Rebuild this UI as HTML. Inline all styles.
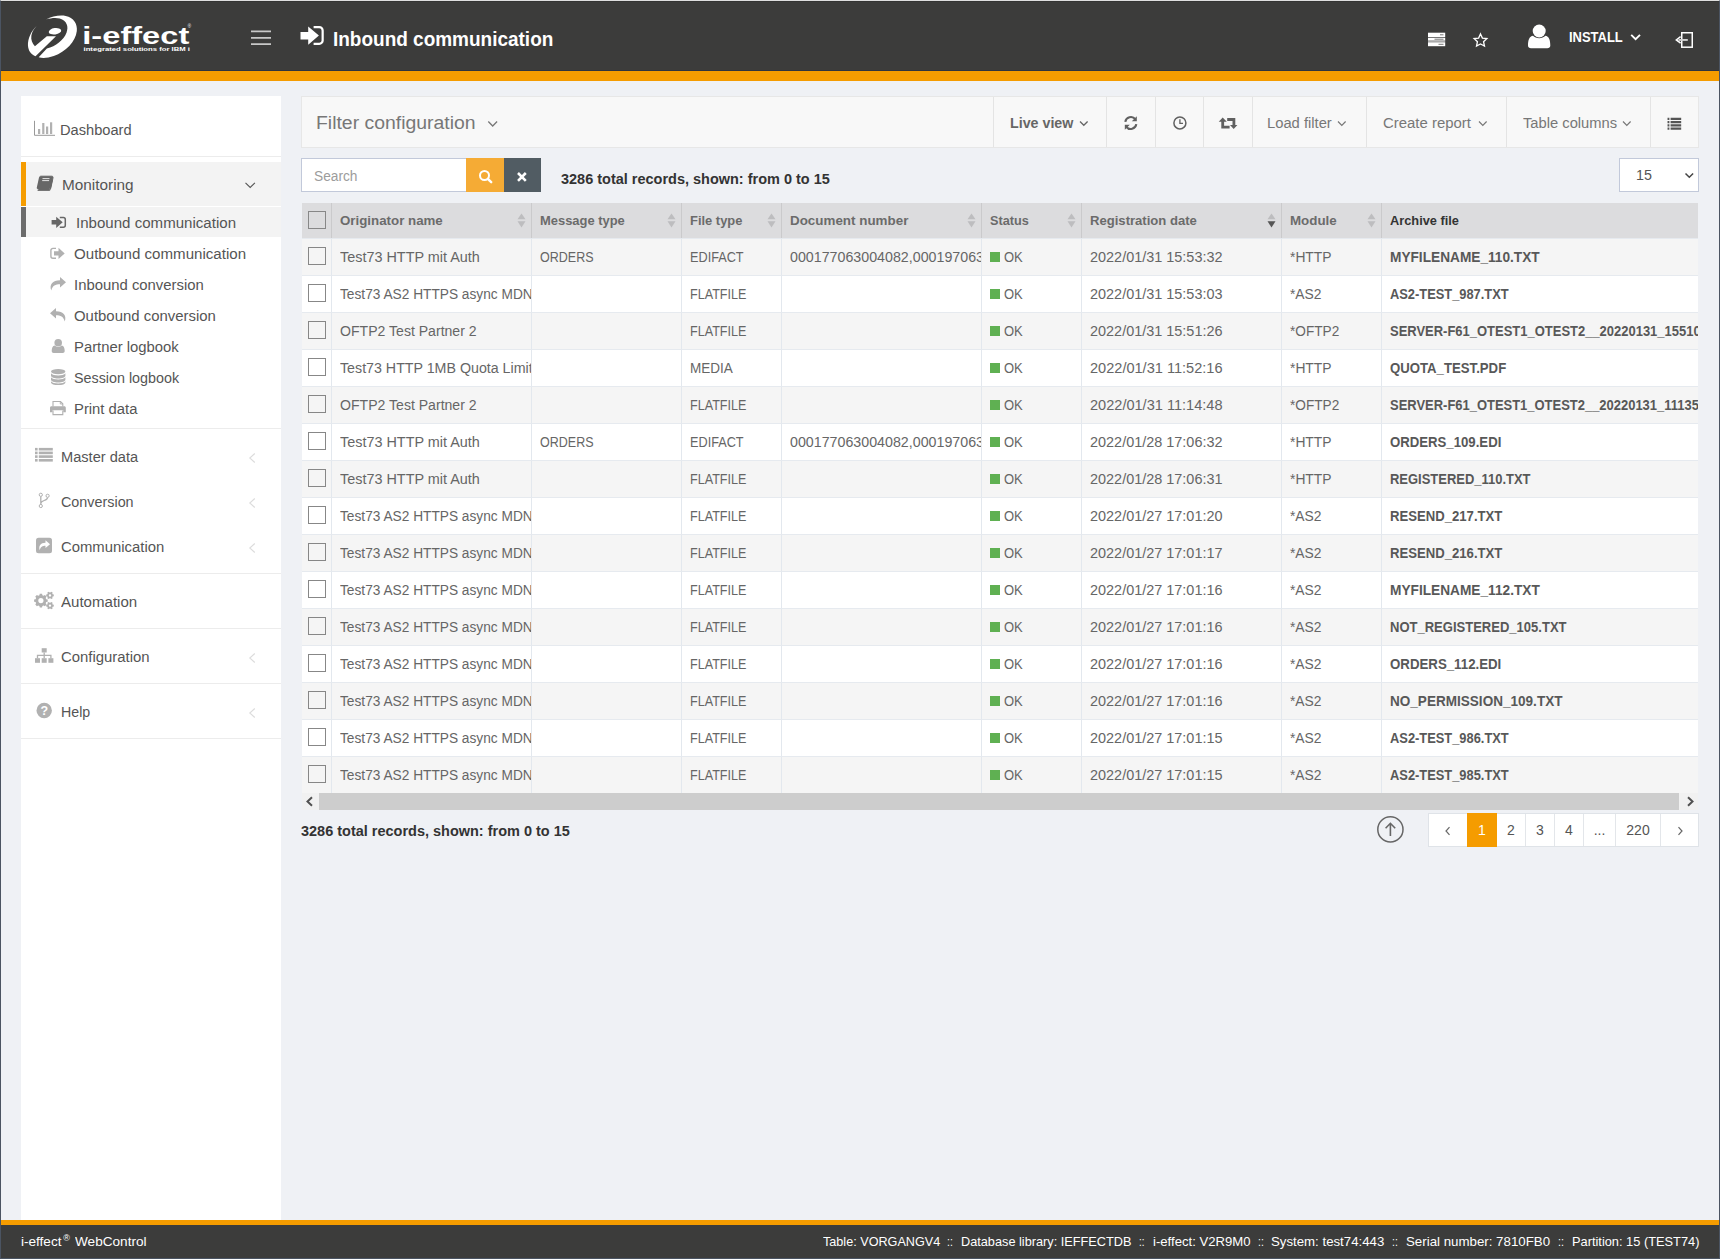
<!DOCTYPE html>
<html lang="en">
<head>
<meta charset="utf-8">
<title>Inbound communication - i-effect WebControl</title>
<style>
*{box-sizing:border-box;margin:0;padding:0}
html,body{width:1720px;height:1259px;overflow:hidden}
body{position:relative;background:#eff1f5;font-family:"Liberation Sans",sans-serif;font-size:14px;color:#555;}
.abs{position:absolute}
.sx{display:inline-block;transform-origin:0 50%;white-space:pre}
#frame{position:absolute;left:0;top:0;width:1720px;height:1259px;border:1px solid #4b5462;border-top-color:#dfdfdf;z-index:100;pointer-events:none}
#header{position:absolute;left:1px;top:1px;width:1718px;height:70px;background:#3c3c3b;border-top:1px solid #343433}
#obar{position:absolute;left:1px;top:70px;width:1718px;height:11px;background:#f59c00;border-top:1px solid #2f343f}
#title{position:absolute;left:333px;top:26px;font-size:20px;font-weight:700;color:#fff;white-space:nowrap;line-height:26px}
#user{position:absolute;left:1569px;top:27px;font-size:14px;font-weight:700;color:#fff;line-height:20px;white-space:nowrap}
#sidebar{position:absolute;left:21px;top:96px;width:260px;height:1124px;background:#fff}
.sep{position:absolute;left:0;width:260px;height:1px;background:#ececec}
.mi,.si{position:absolute;font-size:14px;color:#555;line-height:20px;white-space:nowrap}
#fpanel{position:absolute;left:301px;top:96px;width:1398px;height:52px;background:#f8f8f8;border:1px solid #e7e7e7}
#fpanel .ft{position:absolute;left:14.2px;top:14px;font-size:18px;color:#777;line-height:24px;white-space:nowrap}
.tb{position:absolute;top:0;height:50px;border-left:1px solid #e4e4e4;font-size:14px;color:#777;line-height:53px;white-space:nowrap}
.tb>span{position:absolute;top:0;white-space:nowrap}
#sinput{position:absolute;left:301px;top:158px;width:166px;height:34px;background:#fff;border:1px solid #c2c9da;border-right:none;font-size:14px;color:#9c9c9c;line-height:34px;padding-left:12.3px}
#sbtn{position:absolute;left:466px;top:158px;width:38px;height:34px;background:#f5ab35}
#xbtn{position:absolute;left:504px;top:158px;width:37px;height:34px;background:#515c63}
.rec{position:absolute;font-size:14px;font-weight:700;color:#333;line-height:20px;white-space:nowrap}
#psel{position:absolute;left:1619px;top:158px;width:80px;height:34px;background:#fff;border:1px solid #c2c9da;font-size:14px;color:#555;line-height:33px;padding-left:16px}
#grid{position:absolute;left:302px;top:203px;width:1396px;table-layout:fixed;border-collapse:separate;border-spacing:0;font-size:14px;color:#666}
#grid th{height:35px;background:#dcdcde;border-left:1px solid #cacacc;font-size:13px;font-weight:700;color:#6b6b6b;text-align:left;padding:0 0 0 7.6px;position:relative;white-space:nowrap;overflow:hidden}
#grid th:first-child,#grid td:first-child{border-left:none;padding:0}
#grid td{height:37px;border-left:1px solid #e3e8ee;border-top:1px solid #e6eaef;padding:0 0 0 7.6px;white-space:nowrap;overflow:hidden}
#grid tr:nth-child(odd) td{background:#f5f5f5}
#grid tr:nth-child(even) td{background:#fff}
#grid td.af{font-weight:700;color:#585858}
.cb{display:block;width:18px;height:18px;border:1px solid #878787;margin-left:6px;position:relative;top:-1px}
th .cb{top:-1px}
.sq{display:inline-block;width:10px;height:10px;background:#5fb052;margin-right:4px;vertical-align:0.5px}
.so{position:absolute;right:5px;top:10px;width:9px;height:15px}
#hscroll{position:absolute;left:302px;top:793px;width:1396px;height:17px;background:#f1f1f1}
#hscroll i{position:absolute;left:17px;top:0;width:1360px;height:17px;background:#cdcdcd}
#pager{position:absolute;left:1428px;top:813px;height:34px;display:flex;background:#fff;border:1px solid #dfe3e8;font-size:14px;color:#555}
#pager div{height:32px;line-height:32px;text-align:center;border-left:1px solid #e3e6ea}
#pager div:first-child{border-left:none}
#footer{position:absolute;left:1px;top:1220px;width:1718px;height:38px;background:#3c3c3b;border-top:5px solid #f59c00;color:#fff;font-size:13px}
</style>
</head>
<body>
<div id="header"></div>
<div id="obar"></div>
<svg class="abs" style="left:0;top:0" width="300" height="71" viewBox="0 0 300 71">
 <g transform="translate(24,12) scale(0.03971)" fill="#fff">
  <path d="M555,190 C700,110 900,70 1050,100 C1250,140 1350,300 1330,480 C1300,750 1050,1000 750,1110 C600,1160 470,1172 370,1140 L576,921 C800,860 1000,700 1070,520 C1130,370 1080,220 900,165 C800,140 680,150 555,190 Z"/>
  <path d="M320,350 C180,470 90,680 100,850 C110,980 180,1070 290,1115 L805,610 L575,612 L275,860 C210,800 170,700 185,600 C200,500 250,420 320,350 Z"/>
  <ellipse cx="780" cy="485" rx="158" ry="80" transform="rotate(-8 780 485)"/>
 </g>
 <text x="82.3" y="43.6" font-family="Liberation Sans, sans-serif" font-weight="700" font-size="24.5" fill="#fff" textLength="107" lengthAdjust="spacingAndGlyphs">i-effect</text>
 <text x="187.8" y="28" font-family="Liberation Sans, sans-serif" font-size="4.5" fill="#fff">®</text>
 <g transform="translate(83.5,51.2) scale(0.5)"><text x="0" y="0" font-family="Liberation Sans, sans-serif" font-weight="700" font-size="12" fill="#fff" textLength="213" lengthAdjust="spacingAndGlyphs">integrated solutions for IBM i</text></g>
</svg>
<svg class="abs" style="left:251px;top:30px" width="20" height="16" viewBox="0 0 20 16"><path d="M0,1.300H20M0,7.800H20M0,14.200H20" stroke="#c8c8c8" stroke-width="1.700" fill="none"/></svg>
<svg class="abs" style="left:300px;top:26px" width="25" height="20" viewBox="0 0 25 20"><path d="M0.500,5.900H8.200V0.400L18.900,9.600L8.200,18.800V13.500H0.500Z" fill="#fff"/><path d="M13.600,1.150H19.300A3.350,3.350 0 0 1 22.650,4.500V14.450A3.350,3.350 0 0 1 19.300,17.800H13.600" fill="none" stroke="#fff" stroke-width="2.200"/></svg>
<div id="title"><span class="sx" style="transform:scaleX(0.9488)">Inbound communication</span></div>
<svg class="abs" style="left:1428px;top:32px" width="18" height="15" viewBox="0 0 18 15"><rect x="0" y="0.700" width="17.200" height="4.300" fill="#fff"/><rect x="0" y="5.700" width="17.200" height="3" fill="#fff"/><rect x="0" y="8.700" width="17.200" height="1.600" fill="#aaa"/><rect x="0" y="10.300" width="17.200" height="3.900" fill="#fff"/><path d="M12,2.800H15.500M6.500,7.200H15.500M10.500,12.300H15.500" stroke="#777" stroke-width="1"/></svg>
<svg class="abs" style="left:1471px;top:31px" width="19" height="18" viewBox="0 0 19 18"><path transform="translate(9.5 9.3) scale(0.9) translate(-9.6 -9.3)" d="M9.600,2.200L11.700,6.800L16.700,7.400L13,10.800L14,15.700L9.600,13.300L5.200,15.700L6.200,10.800L2.500,7.400L7.500,6.800Z" fill="none" stroke="#fff" stroke-width="1.450" stroke-linejoin="miter"/></svg>
<svg class="abs" style="left:1527px;top:24px" width="24" height="25" viewBox="0 0 24 25" fill="#fff"><circle cx="12.200" cy="7" r="6.500"/><path d="M1,21.500C1,16 2.500,12.300 6,11.800C7.500,13.200 9.700,14.200 12.200,14.200C14.700,14.200 16.900,13.200 18.400,11.800C21.900,12.300 23.300,16 23.300,21.500C23.300,23.300 22,24.300 20.300,24.300H4C2.300,24.300 1,23.300 1,21.500Z"/></svg>
<div id="user"><span class="sx" style="transform:scaleX(0.9249)">INSTALL</span></div>
<svg class="abs" style="left:1630px;top:33px" width="12" height="8" viewBox="0 0 12 8"><path d="M1.200,1.800L5.600,6.200L10,1.800" fill="none" stroke="#fff" stroke-width="1.900"/></svg>
<svg class="abs" style="left:1675px;top:31px" width="19" height="18" viewBox="0 0 19 18"><rect x="6.750" y="1.750" width="10.500" height="14.450" fill="none" stroke="#fff" stroke-width="1.500"/><path d="M5.600,5.600L1.300,8.900L5.600,12.200" fill="none" stroke="#fff" stroke-width="1.500"/><rect x="3.500" y="8" width="9.300" height="1.900" fill="#d0d0d0"/></svg>
<div id="sidebar">
<div class="sep" style="top:60px"></div>
<div class="sep" style="top:332px"></div>
<div class="sep" style="top:477px"></div>
<div class="sep" style="top:532px"></div>
<div class="sep" style="top:587px"></div>
<div class="sep" style="top:642px"></div>
<div class="abs" style="left:0;top:66px;width:260px;height:44px;background:#f3f3f3;border-left:5px solid #f59c00"></div>
<div class="abs" style="left:0;top:111px;width:260px;height:30px;background:#f3f3f3;border-left:5px solid #6c6c6c"></div>
<div class="mi" style="left:38.8px;top:24.0px"><span class="sx" style="transform:scaleX(1.0453)">Dashboard</span></div>
<div class="mi" style="left:40.8px;top:79.0px"><span class="sx" style="transform:scaleX(1.0952)">Monitoring</span></div>
<div class="si" style="left:55.4px;top:116.5px"><span class="sx" style="transform:scaleX(1.0765)">Inbound communication</span></div>
<div class="si" style="left:53.3px;top:147.5px"><span class="sx" style="transform:scaleX(1.0786)">Outbound communication</span></div>
<div class="si" style="left:53.3px;top:178.5px"><span class="sx" style="transform:scaleX(1.0623)">Inbound conversion</span></div>
<div class="si" style="left:53.3px;top:209.5px"><span class="sx" style="transform:scaleX(1.0657)">Outbound conversion</span></div>
<div class="si" style="left:53.3px;top:240.5px"><span class="sx" style="transform:scaleX(1.0599)">Partner logbook</span></div>
<div class="si" style="left:53.3px;top:271.5px"><span class="sx" style="transform:scaleX(1.0232)">Session logbook</span></div>
<div class="si" style="left:53.3px;top:302.5px"><span class="sx" style="transform:scaleX(1.0578)">Print data</span></div>
<div class="mi" style="left:39.6px;top:351.0px"><span class="sx" style="transform:scaleX(1.0428)">Master data</span></div>
<div class="mi" style="left:39.6px;top:396.0px"><span class="sx" style="transform:scaleX(1.0252)">Conversion</span></div>
<div class="mi" style="left:39.6px;top:441.0px"><span class="sx" style="transform:scaleX(1.0612)">Communication</span></div>
<div class="mi" style="left:39.6px;top:496.0px"><span class="sx" style="transform:scaleX(1.0761)">Automation</span></div>
<div class="mi" style="left:39.6px;top:551.0px"><span class="sx" style="transform:scaleX(1.0643)">Configuration</span></div>
<div class="mi" style="left:39.6px;top:606.0px"><span class="sx" style="transform:scaleX(1.0134)">Help</span></div>
<svg class="abs" style="left:223px;top:85px" width="12" height="9" viewBox="0 0 12 9"><path d="M1.500,1.800L6.200,6.500L10.900,1.800" fill="none" stroke="#555" stroke-width="1.100"/></svg>
<svg class="abs" style="left:227px;top:355.7px" width="9" height="12" viewBox="0 0 9 12"><path d="M6.800,1.500L1.800,6L6.800,10.500" fill="none" stroke="#dcdcdc" stroke-width="1.100"/></svg>
<svg class="abs" style="left:227px;top:400.7px" width="9" height="12" viewBox="0 0 9 12"><path d="M6.800,1.500L1.800,6L6.800,10.500" fill="none" stroke="#dcdcdc" stroke-width="1.100"/></svg>
<svg class="abs" style="left:227px;top:445.7px" width="9" height="12" viewBox="0 0 9 12"><path d="M6.800,1.500L1.800,6L6.800,10.500" fill="none" stroke="#dcdcdc" stroke-width="1.100"/></svg>
<svg class="abs" style="left:227px;top:555.7px" width="9" height="12" viewBox="0 0 9 12"><path d="M6.800,1.500L1.800,6L6.800,10.500" fill="none" stroke="#dcdcdc" stroke-width="1.100"/></svg>
<svg class="abs" style="left:227px;top:610.7px" width="9" height="12" viewBox="0 0 9 12"><path d="M6.800,1.500L1.800,6L6.800,10.500" fill="none" stroke="#dcdcdc" stroke-width="1.100"/></svg>
<svg class="abs" style="left:13px;top:24px" width="22" height="17" viewBox="0 0 22 17"><path d="M0.500,0.800V15.300H21" fill="none" stroke="#999" stroke-width="1"/><rect x="4" y="9" width="2.200" height="5" fill="#b1b1b1"/><rect x="8.200" y="3" width="2.200" height="11" fill="#b1b1b1"/><rect x="12" y="6.500" width="2.200" height="7.500" fill="#b1b1b1"/><rect x="16" y="2.300" width="2.200" height="11.700" fill="#b1b1b1"/></svg>
<svg class="abs" style="left:15px;top:79px" width="18" height="17" viewBox="0 0 18 17"><path d="M4.300,1.200H15.800C16.700,1.200 17.200,1.900 17,2.800L14.800,13.200C14.600,14 14,14.500 13.200,14.500H2.500C1.900,14.500 1.600,15 1.900,15.400H13.800L16.200,5.500" fill="none" stroke="#676767" stroke-width="1"/><path d="M4.300,1.200H15.800C16.700,1.200 17.200,1.900 17,2.800L14.800,12.600C14.600,13.400 14,13.900 13.200,13.900H1.700C0.900,13.900 0.600,13.300 0.800,12.500L3,2.400C3.200,1.600 3.600,1.200 4.300,1.200Z" fill="#676767"/><path d="M6.500,3.600H13.500M6.200,5.600H13.100" stroke="#f3f3f3" stroke-width="0.900"/></svg>
<svg class="abs" style="left:30px;top:120px" width="16" height="13" viewBox="0 0 16 13"><path d="M0.600,4H5.200V0.700L11.700,6.300L5.200,11.900V8.500H0.600Z" fill="#676767"/><path d="M8.800,1.450H12.300A2,2 0 0 1 14.300,3.450V9.250A2,2 0 0 1 12.300,11.250H8.800" fill="none" stroke="#676767" stroke-width="1.500"/></svg>
<svg class="abs" style="left:29px;top:151px" width="16" height="13" viewBox="0 0 16 13"><path d="M6,1.350H2.900A2,2 0 0 0 0.900,3.350V9.250A2,2 0 0 0 2.900,11.250H6" fill="none" stroke="#b1b1b1" stroke-width="1.400"/><path d="M4,4.200H8.500V0.800L14.700,6.400L8.500,12V8.600H4Z" fill="#b1b1b1"/></svg>
<svg class="abs" style="left:28px;top:180px" width="18" height="16" viewBox="0 0 18 16"><path d="M11,1L17,6.200L11,11.400V8.300C6.500,8.300 3.500,9.500 2.300,14.600C0,8.500 3.500,4.200 11,4.200Z" fill="#b1b1b1"/></svg>
<svg class="abs" style="left:28px;top:211px" width="18" height="16" viewBox="0 0 18 16"><path d="M7,1L1,6.200L7,11.400V8.300C11.500,8.300 14.500,9.500 15.700,14.600C18,8.500 14.500,4.200 7,4.200Z" fill="#b1b1b1"/></svg>
<svg class="abs" style="left:30px;top:242px" width="15" height="16" viewBox="0 0 15 16"><circle cx="7.200" cy="4.800" r="3.800" fill="#b1b1b1"/><path d="M0.700,13C0.700,10 1.600,7.700 3.700,7.500C4.600,8.300 5.800,8.900 7.200,8.900C8.600,8.900 9.800,8.300 10.700,7.500C12.800,7.700 13.700,10 13.700,13C13.700,14.200 12.900,15 11.800,15H2.600C1.500,15 0.700,14.200 0.700,13Z" fill="#b1b1b1"/></svg>
<svg class="abs" style="left:29px;top:272px" width="16" height="18" viewBox="0 0 16 18"><ellipse cx="8.200" cy="3.600" rx="7.200" ry="2.700" fill="#b1b1b1"/><path d="M1,5.300C2,6.900 5,7.400 8.200,7.400C11.400,7.400 14.400,6.900 15.400,5.300V7.700C15.400,9.200 12.200,10.400 8.200,10.400C4.200,10.400 1,9.200 1,7.700Z" fill="#b1b1b1"/><path d="M1,9.300C2,10.900 5,11.400 8.200,11.400C11.400,11.400 14.400,10.900 15.400,9.300V11.700C15.400,13.200 12.200,14.400 8.200,14.400C4.200,14.400 1,13.200 1,11.700Z" fill="#b1b1b1"/><path d="M1,13.300C2,14.900 5,15.400 8.200,15.400C11.400,15.400 14.400,14.900 15.400,13.300V14.400C15.400,15.900 12.200,17.100 8.200,17.100C4.200,17.100 1,15.900 1,14.400Z" fill="#b1b1b1"/></svg>
<svg class="abs" style="left:28px;top:304px" width="18" height="16" viewBox="0 0 18 16"><path d="M4,6.500V1.500H11.500L13.800,3.800V6.500" fill="none" stroke="#b1b1b1" stroke-width="1.100"/><path d="M11.300,1.500V4H13.800" fill="none" stroke="#b1b1b1" stroke-width="0.900"/><path d="M2.500,6.200H15.300C16.200,6.200 16.800,6.800 16.800,7.700V12.300H14.300V10.200H3.500V12.300H1V7.700C1,6.800 1.600,6.200 2.500,6.200Z" fill="#b1b1b1"/><path d="M4,10.500V14.600H13.800V10.500" fill="none" stroke="#b1b1b1" stroke-width="1.100"/></svg>
<svg class="abs" style="left:13px;top:351px" width="20" height="16" viewBox="0 0 20 16"><rect x="1" y="0.9" width="2.600" height="2.600" fill="#b1b1b1"/><rect x="4.800" y="0.9" width="14" height="2.600" fill="#b1b1b1"/><rect x="1" y="4.6" width="2.600" height="2.600" fill="#b1b1b1"/><rect x="4.800" y="4.6" width="14" height="2.600" fill="#b1b1b1"/><rect x="1" y="8.3" width="2.600" height="2.600" fill="#b1b1b1"/><rect x="4.800" y="8.3" width="14" height="2.600" fill="#b1b1b1"/><rect x="1" y="12.0" width="2.600" height="2.600" fill="#b1b1b1"/><rect x="4.800" y="12.0" width="14" height="2.600" fill="#b1b1b1"/></svg>
<svg class="abs" style="left:17px;top:396px" width="13" height="17" viewBox="0 0 13 17"><circle cx="2.800" cy="2.800" r="1.600" fill="none" stroke="#b1b1b1" stroke-width="1"/><circle cx="2.800" cy="14" r="1.600" fill="none" stroke="#b1b1b1" stroke-width="1"/><circle cx="9.600" cy="3.800" r="1.600" fill="none" stroke="#b1b1b1" stroke-width="1"/><path d="M2.800,4.400V12.400M9.600,5.400C9.600,9 2.800,8 2.800,11.500" fill="none" stroke="#b1b1b1" stroke-width="1.300"/></svg>
<svg class="abs" style="left:14px;top:441px" width="18" height="17" viewBox="0 0 18 17"><rect x="1" y="0.800" width="16" height="15.400" rx="2.500" fill="#b1b1b1"/><path d="M10.500,3.300L15,7.200L10.500,11.100V8.800C7.500,8.800 5.500,9.700 4.800,13.300C3.300,9 5.500,5.700 10.500,5.700Z" fill="#fff"/></svg>
<svg class="abs" style="left:12px;top:495px" width="22" height="19" viewBox="0 0 22 19"><path d="M13.20,8.13L14.70,8.43L14.70,10.77L13.20,11.07L12.69,12.31L13.53,13.58L11.88,15.23L10.61,14.39L9.37,14.90L9.07,16.40L6.73,16.40L6.43,14.90L5.19,14.39L3.92,15.23L2.27,13.58L3.11,12.31L2.60,11.07L1.10,10.77L1.10,8.43L2.60,8.13L3.11,6.89L2.27,5.62L3.92,3.97L5.19,4.81L6.43,4.30L6.73,2.80L9.07,2.80L9.37,4.30L10.61,4.81L11.88,3.97L13.53,5.62L12.69,6.89ZM10.50,9.60A2.6,2.6 0 1,0 5.30,9.60A2.6,2.6 0 1,0 10.50,9.60Z" fill="#b1b1b1" fill-rule="evenodd"/><path d="M19.67,3.27L20.81,3.55L20.81,5.25L19.67,5.53L19.31,6.15L19.64,7.27L18.17,8.12L17.36,7.28L16.64,7.28L15.83,8.12L14.36,7.27L14.69,6.15L14.33,5.53L13.19,5.25L13.19,3.55L14.33,3.27L14.69,2.65L14.36,1.53L15.83,0.68L16.64,1.52L17.36,1.52L18.17,0.68L19.64,1.53L19.31,2.65ZM18.20,4.40A1.2,1.2 0 1,0 15.80,4.40A1.2,1.2 0 1,0 18.20,4.40Z" fill="#b1b1b1" fill-rule="evenodd"/><path d="M19.67,13.47L20.81,13.75L20.81,15.45L19.67,15.73L19.31,16.35L19.64,17.47L18.17,18.32L17.36,17.48L16.64,17.48L15.83,18.32L14.36,17.47L14.69,16.35L14.33,15.73L13.19,15.45L13.19,13.75L14.33,13.47L14.69,12.85L14.36,11.73L15.83,10.88L16.64,11.72L17.36,11.72L18.17,10.88L19.64,11.73L19.31,12.85ZM18.20,14.60A1.2,1.2 0 1,0 15.80,14.60A1.2,1.2 0 1,0 18.20,14.60Z" fill="#b1b1b1" fill-rule="evenodd"/></svg>
<svg class="abs" style="left:13px;top:551px" width="21" height="17" viewBox="0 0 21 17"><rect x="7.700" y="1.200" width="5" height="4.300" fill="#b1b1b1"/><rect x="1" y="11.200" width="5" height="4.600" fill="#b1b1b1"/><rect x="7.700" y="11.200" width="5" height="4.600" fill="#b1b1b1"/><rect x="14.400" y="11.200" width="5" height="4.600" fill="#b1b1b1"/><path d="M10.200,5.500V11.200M3.500,11.200V8.400H16.900V11.200" fill="none" stroke="#b1b1b1" stroke-width="1.300"/></svg>
<svg class="abs" style="left:15px;top:606px" width="17" height="17" viewBox="0 0 17 17"><circle cx="8.200" cy="8.500" r="7.700" fill="#b1b1b1"/><text x="8.200" y="13" text-anchor="middle" font-family="Liberation Sans, sans-serif" font-weight="700" font-size="12.500" fill="#fff">?</text></svg>
</div>
<div id="fpanel">
<div class="ft"><span class="sx" style="transform:scaleX(1.0779)">Filter configuration</span></div>
<svg class="abs" style="left:185px;top:23px" width="12" height="9" viewBox="0 0 12 9"><path d="M1.300,1.500L5.700,6L10.100,1.500" fill="none" stroke="#777" stroke-width="1.300"/></svg>
<div class="tb" style="left:691px;width:113px;font-weight:700;color:#666"><span style="left:16.3px"><span class="sx" style="transform:scaleX(1.0175)">Live view</span></span><svg class="abs" style="left:85px;top:23px" width="10" height="8" viewBox="0 0 10 8"><path d="M1,1.500L4.800,5.300L8.600,1.500" fill="none" stroke="#666" stroke-width="1.3"/></svg></div>
<div class="tb" style="left:804px;width:49px"><svg class="abs" style="left:16px;top:18px" width="16" height="16" viewBox="0 0 16 16"><path d="M2.300,6.800A5.600,5.600 0 0 1 12.300,4.200" fill="none" stroke="#606060" stroke-width="2.100"/><path d="M13.800,1.200V6.200H8.800Z" fill="#606060"/><path d="M13.300,9.200A5.600,5.600 0 0 1 3.300,11.800" fill="none" stroke="#606060" stroke-width="2.100"/><path d="M1.800,14.800V9.800H6.800Z" fill="#606060"/></svg></div>
<div class="tb" style="left:853px;width:49px"><svg class="abs" style="left:15.500px;top:17.700px" width="16" height="16" viewBox="0 0 16 16"><circle cx="7.900" cy="7.900" r="6" fill="none" stroke="#606060" stroke-width="1.500"/><path d="M7.900,4.200V8.300H11" fill="none" stroke="#606060" stroke-width="1.300"/></svg></div>
<div class="tb" style="left:901px;width:49px"><svg class="abs" style="left:14px;top:20px" width="21" height="14" viewBox="0 0 21 14"><path d="M4.700,0.600L8.800,4.700H6.100V8.800H11.600V11.600H3.300V4.700H0.700Z" fill="#606060"/><path d="M9.200,1H17.300V7.900H19.400L15.700,12.100L12,7.900H14.500V3.900H9.200Z" fill="#606060"/></svg></div>
<div class="tb" style="left:950px;width:114px"><span style="left:14.400px"><span class="sx" style="transform:scaleX(1.0537)">Load filter</span></span><svg class="abs" style="left:84px;top:23px" width="10" height="8" viewBox="0 0 10 8"><path d="M1,1.500L4.800,5.300L8.600,1.500" fill="none" stroke="#777" stroke-width="1.2"/></svg></div>
<div class="tb" style="left:1064px;width:140px"><span style="left:15.600px"><span class="sx" style="transform:scaleX(1.0655)">Create report</span></span><svg class="abs" style="left:111px;top:23px" width="10" height="8" viewBox="0 0 10 8"><path d="M1,1.500L4.800,5.300L8.600,1.500" fill="none" stroke="#777" stroke-width="1.2"/></svg></div>
<div class="tb" style="left:1204px;width:144px"><span style="left:15.700px"><span class="sx" style="transform:scaleX(1.0514)">Table columns</span></span><svg class="abs" style="left:115px;top:23px" width="10" height="8" viewBox="0 0 10 8"><path d="M1,1.500L4.800,5.300L8.600,1.500" fill="none" stroke="#777" stroke-width="1.2"/></svg></div>
<div class="tb" style="left:1348px;width:48px"><svg class="abs" style="left:16px;top:19.500px" width="15" height="13" viewBox="0 0 16 14"><path d="M0.500,2H2.500M0.500,5.500H2.500M0.500,9H2.500M0.500,12.500H2.500" stroke="#555" stroke-width="2.200"/><path d="M3.800,2H15.200M3.800,5.500H15.200M3.800,9H15.200M3.800,12.500H15.200" stroke="#555" stroke-width="2.200"/></svg></div>
</div>
<div id="sinput"><span class="sx" style="transform:scaleX(0.9803)">Search</span></div>
<div id="sbtn"><svg class="abs" style="left:12px;top:11px" width="16" height="15" viewBox="0 0 16 15"><circle cx="6.500" cy="6.500" r="4.500" fill="none" stroke="#fff" stroke-width="2"/><path d="M9.800,9.800L13.200,13.200" stroke="#fff" stroke-width="2.400" stroke-linecap="round"/></svg></div>
<div id="xbtn"><svg class="abs" style="left:12px;top:12.500px" width="12" height="12" viewBox="0 0 12 12"><path d="M2,2L9.800,9.800M9.800,2L2,9.800" stroke="#fff" stroke-width="2.600"/></svg></div>
<div class="rec" style="left:561px;top:169px"><span class="sx" style="transform:scaleX(1.0343)">3286 total records, shown: from 0 to 15</span></div>
<div id="psel"><span class="sx" style="transform:scaleX(1.0217)">15</span><svg class="abs" style="left:64px;top:12.500px" width="11" height="8" viewBox="0 0 11 8"><path d="M1.500,1.500L5.300,5.300L9.100,1.500" fill="none" stroke="#444" stroke-width="1.500"/></svg></div>
<table id="grid"><colgroup><col style="width:29px"><col style="width:200px"><col style="width:150px"><col style="width:100px"><col style="width:200px"><col style="width:100px"><col style="width:200px"><col style="width:100px"><col style="width:317px"></colgroup>
<thead><tr><th><span class="cb"></span></th><th><span class="sx" style="transform:scaleX(1.0235)">Originator name</span><svg class="so" viewBox="0 0 9 15"><path d="M0.500,6.300L4.500,0.500L8.500,6.300Z" fill="#bdbdbf"/><path d="M0.500,8.200L4.500,14.500L8.500,8.200Z" fill="#bdbdbf"/></svg></th><th><span class="sx" style="transform:scaleX(0.9947)">Message type</span><svg class="so" viewBox="0 0 9 15"><path d="M0.500,6.300L4.500,0.500L8.500,6.300Z" fill="#bdbdbf"/><path d="M0.500,8.200L4.500,14.500L8.500,8.200Z" fill="#bdbdbf"/></svg></th><th><span class="sx" style="transform:scaleX(0.9934)">File type</span><svg class="so" viewBox="0 0 9 15"><path d="M0.500,6.300L4.500,0.500L8.500,6.300Z" fill="#bdbdbf"/><path d="M0.500,8.200L4.500,14.500L8.500,8.200Z" fill="#bdbdbf"/></svg></th><th><span class="sx" style="transform:scaleX(1.0307)">Document number</span><svg class="so" viewBox="0 0 9 15"><path d="M0.500,6.300L4.500,0.500L8.500,6.300Z" fill="#bdbdbf"/><path d="M0.500,8.200L4.500,14.500L8.500,8.200Z" fill="#bdbdbf"/></svg></th><th><span class="sx" style="transform:scaleX(0.9761)">Status</span><svg class="so" viewBox="0 0 9 15"><path d="M0.500,6.300L4.500,0.500L8.500,6.300Z" fill="#bdbdbf"/><path d="M0.500,8.200L4.500,14.500L8.500,8.200Z" fill="#bdbdbf"/></svg></th><th><span class="sx" style="transform:scaleX(1.0067)">Registration date</span><svg class="so" viewBox="0 0 9 15"><path d="M0.500,6.300L4.500,0.500L8.500,6.300Z" fill="#bdbdbf"/><path d="M0.500,8.200L4.500,14.500L8.500,8.200Z" fill="#555"/></svg></th><th><span class="sx" style="transform:scaleX(1.0264)">Module</span><svg class="so" viewBox="0 0 9 15"><path d="M0.500,6.300L4.500,0.500L8.500,6.300Z" fill="#bdbdbf"/><path d="M0.500,8.200L4.500,14.500L8.500,8.200Z" fill="#bdbdbf"/></svg></th><th style="color:#333"><span class="sx" style="transform:scaleX(0.9834)">Archive file</span></th></tr></thead>
<tbody>
<tr><td><span class="cb"></span></td><td><span class="sx" style="transform:scaleX(1.0289)">Test73 HTTP mit Auth</span></td><td><span class="sx" style="transform:scaleX(0.8935)">ORDERS</span></td><td><span class="sx" style="transform:scaleX(0.9066)">EDIFACT</span></td><td><span class="sx" style="transform:scaleX(1.0169)">000177063004082,000197063004082</span></td><td><span class="sq"></span><span class="sx" style="transform:scaleX(0.9284)">OK</span></td><td><span class="sx" style="transform:scaleX(1.0316)">2022/01/31 15:53:32</span></td><td><span class="sx" style="transform:scaleX(0.9881)">*HTTP</span></td><td class="af"><span class="sx" style="transform:scaleX(0.9768)">MYFILENAME_110.TXT</span></td></tr>
<tr><td><span class="cb"></span></td><td><span class="sx" style="transform:scaleX(0.9788)">Test73 AS2 HTTPS async MDN</span></td><td></td><td><span class="sx" style="transform:scaleX(0.8988)">FLATFILE</span></td><td></td><td><span class="sq"></span><span class="sx" style="transform:scaleX(0.9284)">OK</span></td><td><span class="sx" style="transform:scaleX(1.0316)">2022/01/31 15:53:03</span></td><td><span class="sx" style="transform:scaleX(0.9863)">*AS2</span></td><td class="af"><span class="sx" style="transform:scaleX(0.9185)">AS2-TEST_987.TXT</span></td></tr>
<tr><td><span class="cb"></span></td><td><span class="sx" style="transform:scaleX(1.0053)">OFTP2 Test Partner 2</span></td><td></td><td><span class="sx" style="transform:scaleX(0.8988)">FLATFILE</span></td><td></td><td><span class="sq"></span><span class="sx" style="transform:scaleX(0.9284)">OK</span></td><td><span class="sx" style="transform:scaleX(1.0316)">2022/01/31 15:51:26</span></td><td><span class="sx" style="transform:scaleX(0.9731)">*OFTP2</span></td><td class="af"><span class="sx" style="transform:scaleX(0.9268)">SERVER-F61_OTEST1_OTEST2__20220131_155100.TXT</span></td></tr>
<tr><td><span class="cb"></span></td><td><span class="sx" style="transform:scaleX(1.0162)">Test73 HTTP 1MB Quota Limit</span></td><td></td><td><span class="sx" style="transform:scaleX(0.9659)">MEDIA</span></td><td></td><td><span class="sq"></span><span class="sx" style="transform:scaleX(0.9284)">OK</span></td><td><span class="sx" style="transform:scaleX(1.0397)">2022/01/31 11:52:16</span></td><td><span class="sx" style="transform:scaleX(0.9881)">*HTTP</span></td><td class="af"><span class="sx" style="transform:scaleX(0.9414)">QUOTA_TEST.PDF</span></td></tr>
<tr><td><span class="cb"></span></td><td><span class="sx" style="transform:scaleX(1.0053)">OFTP2 Test Partner 2</span></td><td></td><td><span class="sx" style="transform:scaleX(0.8988)">FLATFILE</span></td><td></td><td><span class="sq"></span><span class="sx" style="transform:scaleX(0.9284)">OK</span></td><td><span class="sx" style="transform:scaleX(1.0397)">2022/01/31 11:14:48</span></td><td><span class="sx" style="transform:scaleX(0.9731)">*OFTP2</span></td><td class="af"><span class="sx" style="transform:scaleX(0.9257)">SERVER-F61_OTEST1_OTEST2__20220131_111354.TXT</span></td></tr>
<tr><td><span class="cb"></span></td><td><span class="sx" style="transform:scaleX(1.0289)">Test73 HTTP mit Auth</span></td><td><span class="sx" style="transform:scaleX(0.8935)">ORDERS</span></td><td><span class="sx" style="transform:scaleX(0.9066)">EDIFACT</span></td><td><span class="sx" style="transform:scaleX(1.0169)">000177063004082,000197063004082</span></td><td><span class="sq"></span><span class="sx" style="transform:scaleX(0.9284)">OK</span></td><td><span class="sx" style="transform:scaleX(1.0316)">2022/01/28 17:06:32</span></td><td><span class="sx" style="transform:scaleX(0.9881)">*HTTP</span></td><td class="af"><span class="sx" style="transform:scaleX(0.9412)">ORDERS_109.EDI</span></td></tr>
<tr><td><span class="cb"></span></td><td><span class="sx" style="transform:scaleX(1.0289)">Test73 HTTP mit Auth</span></td><td></td><td><span class="sx" style="transform:scaleX(0.8988)">FLATFILE</span></td><td></td><td><span class="sq"></span><span class="sx" style="transform:scaleX(0.9284)">OK</span></td><td><span class="sx" style="transform:scaleX(1.0316)">2022/01/28 17:06:31</span></td><td><span class="sx" style="transform:scaleX(0.9881)">*HTTP</span></td><td class="af"><span class="sx" style="transform:scaleX(0.9262)">REGISTERED_110.TXT</span></td></tr>
<tr><td><span class="cb"></span></td><td><span class="sx" style="transform:scaleX(0.9788)">Test73 AS2 HTTPS async MDN</span></td><td></td><td><span class="sx" style="transform:scaleX(0.8988)">FLATFILE</span></td><td></td><td><span class="sq"></span><span class="sx" style="transform:scaleX(0.9284)">OK</span></td><td><span class="sx" style="transform:scaleX(1.0316)">2022/01/27 17:01:20</span></td><td><span class="sx" style="transform:scaleX(0.9863)">*AS2</span></td><td class="af"><span class="sx" style="transform:scaleX(0.9373)">RESEND_217.TXT</span></td></tr>
<tr><td><span class="cb"></span></td><td><span class="sx" style="transform:scaleX(0.9788)">Test73 AS2 HTTPS async MDN</span></td><td></td><td><span class="sx" style="transform:scaleX(0.8988)">FLATFILE</span></td><td></td><td><span class="sq"></span><span class="sx" style="transform:scaleX(0.9284)">OK</span></td><td><span class="sx" style="transform:scaleX(1.0316)">2022/01/27 17:01:17</span></td><td><span class="sx" style="transform:scaleX(0.9863)">*AS2</span></td><td class="af"><span class="sx" style="transform:scaleX(0.9373)">RESEND_216.TXT</span></td></tr>
<tr><td><span class="cb"></span></td><td><span class="sx" style="transform:scaleX(0.9788)">Test73 AS2 HTTPS async MDN</span></td><td></td><td><span class="sx" style="transform:scaleX(0.8988)">FLATFILE</span></td><td></td><td><span class="sq"></span><span class="sx" style="transform:scaleX(0.9284)">OK</span></td><td><span class="sx" style="transform:scaleX(1.0316)">2022/01/27 17:01:16</span></td><td><span class="sx" style="transform:scaleX(0.9863)">*AS2</span></td><td class="af"><span class="sx" style="transform:scaleX(0.9775)">MYFILENAME_112.TXT</span></td></tr>
<tr><td><span class="cb"></span></td><td><span class="sx" style="transform:scaleX(0.9788)">Test73 AS2 HTTPS async MDN</span></td><td></td><td><span class="sx" style="transform:scaleX(0.8988)">FLATFILE</span></td><td></td><td><span class="sq"></span><span class="sx" style="transform:scaleX(0.9284)">OK</span></td><td><span class="sx" style="transform:scaleX(1.0316)">2022/01/27 17:01:16</span></td><td><span class="sx" style="transform:scaleX(0.9863)">*AS2</span></td><td class="af"><span class="sx" style="transform:scaleX(0.9299)">NOT_REGISTERED_105.TXT</span></td></tr>
<tr><td><span class="cb"></span></td><td><span class="sx" style="transform:scaleX(0.9788)">Test73 AS2 HTTPS async MDN</span></td><td></td><td><span class="sx" style="transform:scaleX(0.8988)">FLATFILE</span></td><td></td><td><span class="sq"></span><span class="sx" style="transform:scaleX(0.9284)">OK</span></td><td><span class="sx" style="transform:scaleX(1.0316)">2022/01/27 17:01:16</span></td><td><span class="sx" style="transform:scaleX(0.9863)">*AS2</span></td><td class="af"><span class="sx" style="transform:scaleX(0.9472)">ORDERS_112.EDI</span></td></tr>
<tr><td><span class="cb"></span></td><td><span class="sx" style="transform:scaleX(0.9788)">Test73 AS2 HTTPS async MDN</span></td><td></td><td><span class="sx" style="transform:scaleX(0.8988)">FLATFILE</span></td><td></td><td><span class="sq"></span><span class="sx" style="transform:scaleX(0.9284)">OK</span></td><td><span class="sx" style="transform:scaleX(1.0316)">2022/01/27 17:01:16</span></td><td><span class="sx" style="transform:scaleX(0.9863)">*AS2</span></td><td class="af"><span class="sx" style="transform:scaleX(0.9681)">NO_PERMISSION_109.TXT</span></td></tr>
<tr><td><span class="cb"></span></td><td><span class="sx" style="transform:scaleX(0.9788)">Test73 AS2 HTTPS async MDN</span></td><td></td><td><span class="sx" style="transform:scaleX(0.8988)">FLATFILE</span></td><td></td><td><span class="sq"></span><span class="sx" style="transform:scaleX(0.9284)">OK</span></td><td><span class="sx" style="transform:scaleX(1.0316)">2022/01/27 17:01:15</span></td><td><span class="sx" style="transform:scaleX(0.9863)">*AS2</span></td><td class="af"><span class="sx" style="transform:scaleX(0.9193)">AS2-TEST_986.TXT</span></td></tr>
<tr><td><span class="cb"></span></td><td><span class="sx" style="transform:scaleX(0.9788)">Test73 AS2 HTTPS async MDN</span></td><td></td><td><span class="sx" style="transform:scaleX(0.8988)">FLATFILE</span></td><td></td><td><span class="sq"></span><span class="sx" style="transform:scaleX(0.9284)">OK</span></td><td><span class="sx" style="transform:scaleX(1.0316)">2022/01/27 17:01:15</span></td><td><span class="sx" style="transform:scaleX(0.9863)">*AS2</span></td><td class="af"><span class="sx" style="transform:scaleX(0.9193)">AS2-TEST_985.TXT</span></td></tr>
</tbody></table>
<div id="hscroll"><i></i><svg class="abs" style="left:3px;top:3px" width="10" height="11" viewBox="0 0 10 11"><path d="M7,1.300L2.500,5.500L7,9.700" fill="none" stroke="#505050" stroke-width="2"/></svg><svg class="abs" style="left:1383px;top:3px" width="10" height="11" viewBox="0 0 10 11"><path d="M3,1.300L7.500,5.500L3,9.700" fill="none" stroke="#505050" stroke-width="2"/></svg></div>
<div class="rec" style="left:301px;top:821px"><span class="sx" style="transform:scaleX(1.0343)">3286 total records, shown: from 0 to 15</span></div>
<svg class="abs" style="left:1376px;top:815px" width="29" height="29" viewBox="0 0 29 29"><circle cx="14.400" cy="14.400" r="12.600" fill="none" stroke="#666" stroke-width="1.500"/><path d="M14.400,21V8.500M9.600,13.200L14.400,8.300L19.200,13.200" fill="none" stroke="#666" stroke-width="1.600"/></svg>
<div id="pager"><div style="width:38px"><svg width="8" height="10" viewBox="0 0 8 10" style="vertical-align:-1px"><path d="M5.500,1.200L2,5L5.500,8.800" fill="none" stroke="#666" stroke-width="1.200"/></svg></div><div style="width:30px;background:#f59c00;color:#fff;border-left:none;margin:-1px 0;height:34px;line-height:34px">1</div><div style="width:28px;border-left:none">2</div><div style="width:29px">3</div><div style="width:29px">4</div><div style="width:32px">...</div><div style="width:45px">220</div><div style="width:38px"><svg width="8" height="10" viewBox="0 0 8 10" style="vertical-align:-1px"><path d="M2.500,1.200L6,5L2.500,8.800" fill="none" stroke="#666" stroke-width="1.200"/></svg></div></div>
<div id="footer"><span class="abs" style="left:20.100px;top:7px;line-height:20px"><span class="sx" style="transform:scaleX(1.0435)">i-effect</span></span><span class="abs" style="left:62.300px;top:6.500px;font-size:9px;line-height:12px">®</span><span class="abs" style="left:73.500px;top:7px;line-height:20px"><span class="sx" style="transform:scaleX(1.0462)">WebControl</span></span><span class="abs" style="left:821.8px;top:7px;line-height:20px"><span class="sx" style="transform:scaleX(0.9719)">Table: VORGANGV4</span></span><span class="abs" style="left:946.1px;top:7px;line-height:20px"><span class="sx" style="transform:scaleX(0.8000)">::</span></span><span class="abs" style="left:959.7px;top:7px;line-height:20px"><span class="sx" style="transform:scaleX(0.9786)">Database library: IEFFECTDB</span></span><span class="abs" style="left:1137.7px;top:7px;line-height:20px"><span class="sx" style="transform:scaleX(0.7586)">::</span></span><span class="abs" style="left:1151.5px;top:7px;line-height:20px"><span class="sx" style="transform:scaleX(1.0107)">i-effect: V2R9M0</span></span><span class="abs" style="left:1256.7px;top:7px;line-height:20px"><span class="sx" style="transform:scaleX(0.8000)">::</span></span><span class="abs" style="left:1270.2px;top:7px;line-height:20px"><span class="sx" style="transform:scaleX(1.0179)">System: test74:443</span></span><span class="abs" style="left:1391.1px;top:7px;line-height:20px"><span class="sx" style="transform:scaleX(0.8000)">::</span></span><span class="abs" style="left:1405.0px;top:7px;line-height:20px"><span class="sx" style="transform:scaleX(1.0224)">Serial number: 7810FB0</span></span><span class="abs" style="left:1556.7px;top:7px;line-height:20px"><span class="sx" style="transform:scaleX(0.8276)">::</span></span><span class="abs" style="left:1570.6px;top:7px;line-height:20px"><span class="sx" style="transform:scaleX(0.9852)">Partition: 15 (TEST74)</span></span></div>
<div id="frame"></div>
</body>
</html>
